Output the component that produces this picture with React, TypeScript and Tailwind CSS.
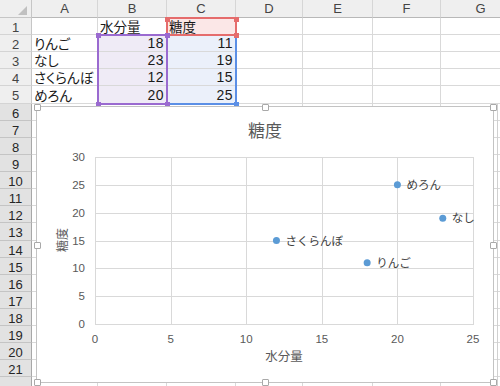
import React from "react";

const cols = ["A", "B", "C", "D", "E", "F", "G"];
const colWidths = [66, 69, 69, 67, 70, 68, 80];
const rowHeights = [17, 17, 17, 17, 18, 17, 17, 17, 17, 17, 17, 17, 18, 17, 17, 17, 17, 17, 17, 17, 17, 30];

type Cell = { t: string; right?: boolean };
const data: Record<number, Record<number, Cell>> = {
  0: { 1: { t: "水分量" }, 2: { t: "糖度" } },
  1: { 0: { t: "りんご" }, 1: { t: "18", right: true }, 2: { t: "11", right: true } },
  2: { 0: { t: "なし" }, 1: { t: "23", right: true }, 2: { t: "19", right: true } },
  3: { 0: { t: "さくらんぼ" }, 1: { t: "12", right: true }, 2: { t: "15", right: true } },
  4: { 0: { t: "めろん" }, 1: { t: "20", right: true }, 2: { t: "25", right: true } },
};

function cellBg(r: number, c: number) {
  if (r === 0 && c === 2) return "bg-[#fbe7e7]";
  if (r >= 1 && r <= 4 && c === 1) return "bg-[#efebf6]";
  if (r >= 1 && r <= 4 && c === 2) return "bg-[#ebf0fa]";
  return "bg-white";
}

const JP = '"Noto Sans CJK JP", sans-serif';
const LS = '"Liberation Sans", sans-serif';

function Handle({ x, y, color }: { x: number; y: number; color: string }) {
  return (
    <div
      className="absolute w-[5px] h-[5px]"
      style={{ left: x - 2.5, top: y - 2.5, background: color }}
    />
  );
}

function ChartHandle({ x, y }: { x: number; y: number }) {
  return (
    <div
      className="absolute w-[7px] h-[7px] bg-white border border-[#a9a9a9] rounded-[1px]"
      style={{ left: x - 3.5, top: y - 3.5 }}
    />
  );
}

const pts = [
  { n: "りんご", x: 18, y: 11 },
  { n: "なし", x: 23, y: 19 },
  { n: "さくらんぼ", x: 12, y: 15 },
  { n: "めろん", x: 20, y: 25 },
];

function Chart() {
  const L = 58, R = 436, T = 50, B = 217;
  const sx = (R - L) / 25;
  const sy = (B - T) / 30;
  const xs = [0, 5, 10, 15, 20, 25];
  const ys = [0, 5, 10, 15, 20, 25, 30];
  return (
    <svg width={456} height={275} className="block">
      <text x={228} y={30} textAnchor="middle" fontSize={17} fill="#595959" fontFamily={JP}>
        糖度
      </text>
      {ys.map((v) => (
        <line key={"h" + v} x1={L} x2={R} y1={Math.round(B - v * sy) + 0.5} y2={Math.round(B - v * sy) + 0.5} stroke="#d9d9d9" strokeWidth={1} />
      ))}
      {xs.map((v) => (
        <line key={"v" + v} y1={T} y2={B + 1} x1={Math.round(L + v * sx) + 0.5} x2={Math.round(L + v * sx) + 0.5} stroke="#d9d9d9" strokeWidth={1} />
      ))}
      {ys.map((v) => (
        <text key={"yl" + v} x={48} y={B - v * sy + 4} textAnchor="end" fontSize={11.5} fill="#595959" fontFamily={LS}>
          {v}
        </text>
      ))}
      {xs.map((v) => (
        <text key={"xl" + v} x={L + v * sx} y={236} textAnchor="middle" fontSize={11.5} fill="#595959" fontFamily={LS}>
          {v}
        </text>
      ))}
      <text x={0} y={0} transform="translate(30 133) rotate(-90)" textAnchor="middle" fontSize={12} fill="#595959" fontFamily={JP}>
        糖度
      </text>
      <text x={247} y={254} textAnchor="middle" fontSize={12.5} fill="#595959" fontFamily={JP}>
        水分量
      </text>
      {pts.map((p) => {
        const cx = L + p.x * sx;
        const cy = B - p.y * sy;
        return (
          <g key={p.n}>
            <circle cx={cx} cy={cy} r={3.5} fill="#5b9bd5" />
            <text x={cx + 9} y={cy + 4} fontSize={11.5} fill="#404040" fontFamily={JP}>
              {p.n}
            </text>
          </g>
        );
      })}
    </svg>
  );
}

export default function App() {
  return (
    <div className="relative w-[500px] h-[386px] overflow-hidden bg-white" style={{ fontFamily: JP }}>
      {/* header row */}
      <div className="flex h-[18px]">
        <div className="w-[32px] shrink-0 bg-[#efefef] border-r border-b border-[#c6c6c6] flex items-end justify-end pr-[4px] pb-[2px]">
          <svg width={9} height={9} className="block">
            <polygon points="9,0 9,9 0,9" fill="#c0c0c0" />
          </svg>
        </div>
        {cols.map((c, i) => (
          <div
            key={c}
            className="shrink-0 bg-[#efefef] border-r border-b border-r-[#d6d6d6] border-b-[#b8b8b8] flex items-center justify-center text-[13px] text-[#444444] leading-[14px]"
            style={{ width: colWidths[i], fontFamily: LS }}
          >
            {c}
          </div>
        ))}
      </div>
      {rowHeights.map((h, r) => (
        <div key={r} className="flex" style={{ height: h }}>
          <div
            className={
              "w-[32px] shrink-0 border-r border-b flex items-center justify-center text-[13px] leading-[13px] pt-[2px] " +
              (r >= 5
                ? "bg-[#e2e2e2] border-r-[#a8a8a8] border-b-[#c4c4c4] text-[#262626]"
                : "bg-[#efefef] border-r-[#c6c6c6] border-b-[#d4d4d4] text-[#444444]")
            }
            style={{ fontFamily: LS }}
          >
            {r + 1}
          </div>
          {cols.map((c, ci) => {
            const cell = data[r]?.[ci];
            return (
              <div
                key={c}
                className={
                  "shrink-0 border-r border-b border-[#d9d9d9] flex items-end px-[2px] pb-[1px] text-[13.5px] leading-[14px] text-[#1a1a1a] whitespace-nowrap " +
                  cellBg(r, ci) +
                  (cell?.right ? " justify-end" : "")
                }
                style={{
                  width: colWidths[ci],
                  fontFeatureSettings: '"palt"',
                  fontFamily: cell?.right ? LS : JP,
                }}
              >
                {cell ? <span className={cell.right ? "tracking-[0.5px] text-[14px]" : ""}>{cell.t}</span> : null}
              </div>
            );
          })}
        </div>
      ))}

      {/* range selection outlines */}
      <div className="absolute left-[166px] top-[34px] w-[71px] h-[71px] border-2 border-[#5b8fe6]" />
      <div className="absolute left-[166px] top-[17px] w-[71px] h-[19px] border-2 border-[#e56c6c]" />
      <div className="absolute left-[97px] top-[34px] w-[71px] h-[71px] border-2 border-[#9a6ad0]" />
      <Handle x={167} y={19} color="#e56c6c" />
      <Handle x={236} y={19} color="#e56c6c" />
      <Handle x={236} y={35} color="#e56c6c" />
      <Handle x={236} y={104} color="#5b8fe6" />
      <Handle x={98} y={35} color="#9a6ad0" />
      <Handle x={167} y={35} color="#9a6ad0" />
      <Handle x={98} y={104} color="#9a6ad0" />
      <Handle x={167} y={104} color="#9a6ad0" />

      {/* chart */}
      <div className="absolute left-[36px] top-[106px] w-[458px] h-[277px] bg-white border border-[#c3c3c3]">
        <Chart />
      </div>
      <div className="absolute left-[497px] top-[104px] w-px h-[282px] bg-[#d0d0d0]" />
      <ChartHandle x={37} y={107} />
      <ChartHandle x={265} y={107} />
      <ChartHandle x={493} y={107} />
      <ChartHandle x={37} y={245} />
      <ChartHandle x={493} y={245} />
      <ChartHandle x={37} y={382} />
      <ChartHandle x={265} y={382} />
      <ChartHandle x={493} y={382} />
    </div>
  );
}
